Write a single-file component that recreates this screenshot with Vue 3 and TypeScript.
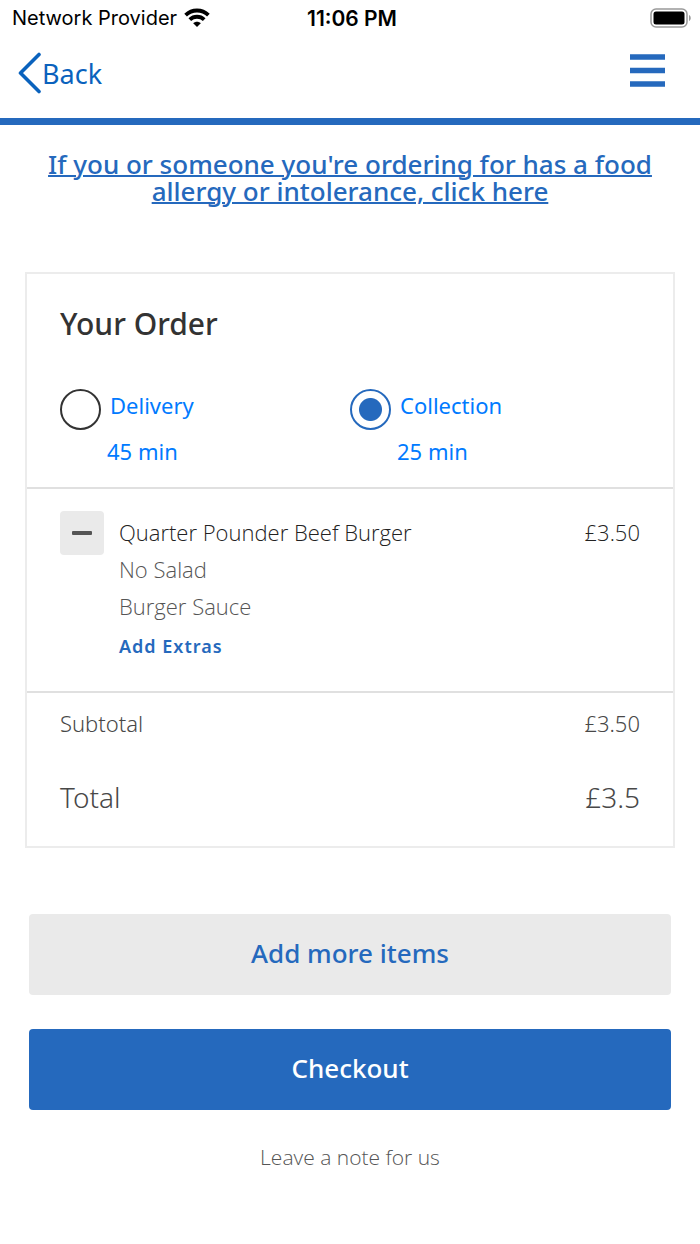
<script setup lang="ts">
import { ref } from 'vue'

interface Method {
  id: string
  label: string
  time: string
}

const methods: Method[] = [
  { id: 'delivery', label: 'Delivery', time: '45 min' },
  { id: 'collection', label: 'Collection', time: '25 min' },
]
const selected = ref<string>('collection')
const options: string[] = ['No Salad', 'Burger Sauce']
</script>

<template>
  <div class="page">
    <div class="status">
      <div class="carrier">
        <span>Network Provider</span>
        <svg width="26" height="20" viewBox="0 0 26 20" aria-hidden="true">
          <g fill="none" stroke="#000" stroke-width="3.8">
            <path d="M1.6 7.200C8 .9 18 .9 24.400 7.200" />
            <path d="M5.800 11.600C9.800 7.800 16.200 7.800 20.200 11.600" />
          </g>
          <path d="M9.200 15.300C11.400 13.300 14.600 13.300 16.800 15.300L13 19Z" />
        </svg>
      </div>
      <span class="clock">11:06 PM</span>
      <svg class="battery" width="42" height="20" viewBox="0 0 42 20" aria-hidden="true">
        <rect x="1" y="1" width="36" height="18" rx="5" fill="none" stroke="#999" stroke-width="1.500" />
        <rect x="3.500" y="3.500" width="31" height="13" rx="2.500" />
        <path d="M39 7C41.300 8 41.300 12 39 13Z" fill="#999" />
      </svg>
    </div>

    <header class="header">
      <button class="back" type="button">
        <svg width="24" height="42" viewBox="0 0 24 42" aria-hidden="true">
          <path d="M21 2.500L2.500 21L21 39.500" fill="none" stroke="#0a62bd" stroke-width="3.600" stroke-linecap="round" stroke-linejoin="round" />
        </svg>
        <span>Back</span>
      </button>
      <button class="menu" type="button" aria-label="Menu">
        <svg width="35" height="34" viewBox="0 0 35 34" aria-hidden="true">
          <path d="M0 3H35M0 16.500H35M0 30H35" stroke="#2569bd" stroke-width="5.400" />
        </svg>
      </button>
    </header>

    <main class="main">
      <a class="allergy" href="#allergy">If you or someone you're ordering for has a food allergy or intolerance, click here</a>

      <section class="card">
        <div class="top">
          <h1>Your Order</h1>
          <div class="methods">
            <label v-for="m in methods" :key="m.id" class="method" :for="m.id">
              <input :id="m.id" v-model="selected" type="radio" name="method" :value="m.id" />
              <span class="method-text">
                <span class="method-name">{{ m.label }}</span>
                <span>{{ m.time }}</span>
              </span>
            </label>
          </div>
        </div>

        <div class="item">
          <button class="minus" type="button" aria-label="Remove one">
            <svg width="20" height="4" viewBox="0 0 20 4" aria-hidden="true"><rect width="20" height="4" rx="1" fill="#555" /></svg>
          </button>
          <div class="details">
            <div class="name">Quarter Pounder Beef Burger</div>
            <div v-for="o in options" :key="o" class="option">{{ o }}</div>
            <button class="extras" type="button">Add Extras</button>
          </div>
          <div class="name">£3.50</div>
        </div>

        <div class="totals">
          <div class="row subtotal"><span>Subtotal</span><span>£3.50</span></div>
          <div class="row total"><span>Total</span><span>£3.5</span></div>
        </div>
      </section>

      <div class="actions">
        <button class="action secondary" type="button">Add more items</button>
        <button class="action primary" type="button">Checkout</button>
        <a class="note" href="#note">Leave a note for us</a>
      </div>
    </main>
  </div>
</template>

<style>
body {
  margin: 0;
  background: #fff;
}
</style>

<style scoped>
.page {
  box-sizing: border-box;
  padding-bottom: 68px;
  font-family: "Noto Sans", "Open Sans", sans-serif;
  font-weight: 300;
  color: #484848;
}
button {
  margin: 0;
  padding: 0;
  border: 0;
  background: none;
  font-family: inherit;
  cursor: pointer;
}
svg {
  display: block;
}
.status {
  display: grid;
  grid-template-columns: 1fr auto 1fr;
  align-items: center;
  height: 36px;
  padding: 0 8px 0 12px;
  font-family: Inter, sans-serif;
  font-size: 20px;
  font-weight: 400;
  color: #000;
}
.carrier {
  display: flex;
  align-items: center;
  gap: 7px;
}
.clock {
  font-size: 21px;
  font-weight: 600;
}
.battery {
  justify-self: end;
}
.header {
  display: flex;
  justify-content: space-between;
  align-items: center;
  height: 82px;
  padding: 0 35px 0 18px;
  border-bottom: 7px solid #2569bd;
}
.back {
  display: flex;
  align-items: center;
  height: 72px;
  font-size: 27px;
  color: #0a62bd;
  margin-bottom: 8px;
}
.menu {
  margin-bottom: 12px;
}
.main {
  padding: 26px 25px 0;
}
.allergy {
  display: block;
  padding: 0 16px;
  font-size: 26px;
  font-weight: 500;
  line-height: 27px;
  text-align: center;
  text-decoration: underline;
  text-decoration-thickness: 2px;
  color: #2569bd;
}
.card {
  margin-top: 67px;
  border: 2px solid #ececec;
}
.top {
  padding: 30px 33px 13px;
}
h1 {
  margin: 0 0 43px;
  font-size: 30px;
  font-weight: 500;
  line-height: 40px;
  color: #333;
}
.methods {
  display: grid;
  grid-template-columns: 1fr 1fr;
}
.method {
  display: flex;
  align-items: flex-start;
  gap: 6px;
  font-size: 22px;
  font-weight: 400;
  line-height: 46px;
  color: #007aff;
  cursor: pointer;
}
.method input {
  appearance: none;
  box-sizing: border-box;
  width: 41px;
  height: 41px;
  margin: 2px 0 0;
  border: 2px solid #333;
  border-radius: 50%;
  flex: none;
}
.method input:checked {
  border-color: #2569bd;
  background: radial-gradient(circle, #2569bd 11px, transparent 12px);
}
.method-text {
  display: flex;
  flex-direction: column;
  margin-top: -5px;
}
.method-name {
  padding-left: 3px;
}
.item {
  display: flex;
  align-items: flex-start;
  padding: 22px 33px 27px;
  border-top: 2px solid #e0e0e0;
}
.minus {
  display: flex;
  align-items: center;
  justify-content: center;
  width: 44px;
  height: 44px;
  border-radius: 4px;
  background: #eaeaea;
}
.details {
  flex: 1;
  margin-left: 15px;
}
.name,
.option {
  font-family: "Open Sans", sans-serif;
  font-size: 22px;
  line-height: 37px;
}
.name {
  padding-top: 3px;
  color: #222;
}
.option {
  color: #555;
}
.extras {
  display: block;
  margin-top: 4px;
  font-size: 18px;
  font-weight: 600;
  line-height: 35px;
  letter-spacing: 1px;
  color: #2569bd;
}
.totals {
  padding: 12px 33px 27px;
  border-top: 2px solid #e0e0e0;
}
.row {
  display: flex;
  justify-content: space-between;
}
.subtotal {
  font-size: 22px;
  line-height: 36px;
  margin-bottom: 34px;
}
.total {
  font-size: 28px;
  line-height: 44px;
}
.actions {
  display: flex;
  flex-direction: column;
  margin: 66px 4px 0;
}
.action {
  height: 81px;
  padding-bottom: 3px;
  border-radius: 4px;
  font-size: 26px;
  font-weight: 500;
}
.secondary {
  margin-bottom: 34px;
  background: #eaeaea;
  color: #2569bd;
}
.primary {
  background: #2569bd;
  color: #fff;
}
.note {
  align-self: center;
  margin-top: 29px;
  font-family: "Open Sans", sans-serif;
  font-size: 21px;
  line-height: 36px;
  color: #555;
  text-decoration: none;
}
</style>
